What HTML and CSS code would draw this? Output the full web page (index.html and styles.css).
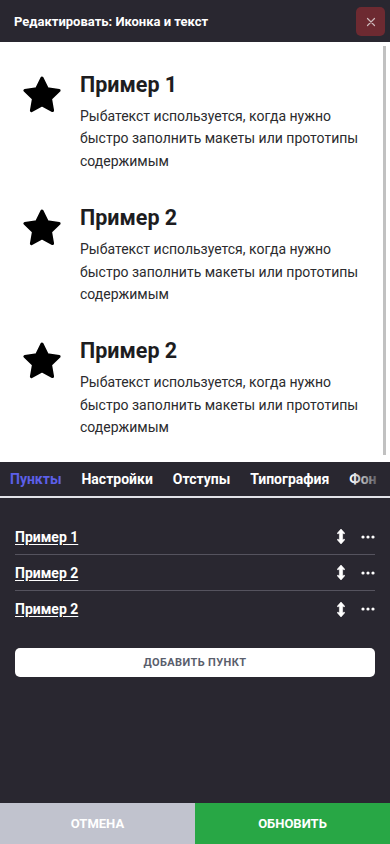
FILE: index.html
```html
<!DOCTYPE html>
<html lang="ru">
<head>
<meta charset="utf-8">
<title>Редактировать: Иконка и текст</title>
<link rel="stylesheet" href="styles.css">
</head>
<body>
<div class="app">
  <header class="header">
    <div class="header-title">Редактировать: Иконка и текст</div>
    <button class="close-btn" aria-label="Закрыть">
      <svg width="10" height="10" viewBox="0 0 10 10"><path d="M1.5 1.5 L8.5 8.5 M8.5 1.5 L1.5 8.5" stroke="#cdb9bb" stroke-width="1.2" stroke-linecap="round"/></svg>
    </button>
  </header>

  <section class="preview">
    <div class="item">
      <svg class="star" viewBox="0 0 40 40"><polygon points="20,3 25.29,13.72 37.12,15.44 28.56,23.78 30.58,35.56 20,30 9.42,35.56 11.44,23.78 2.88,15.44 14.71,13.72" fill="#000" stroke="#000" stroke-width="3" stroke-linejoin="round"/></svg>
      <div class="item-body">
        <h2 class="item-title">Пример 1</h2>
        <p class="item-text">Рыбатекст используется, когда нужно быстро заполнить макеты или прототипы содержимым</p>
      </div>
    </div>
    <div class="item">
      <svg class="star" viewBox="0 0 40 40"><polygon points="20,3 25.29,13.72 37.12,15.44 28.56,23.78 30.58,35.56 20,30 9.42,35.56 11.44,23.78 2.88,15.44 14.71,13.72" fill="#000" stroke="#000" stroke-width="3" stroke-linejoin="round"/></svg>
      <div class="item-body">
        <h2 class="item-title">Пример 2</h2>
        <p class="item-text">Рыбатекст используется, когда нужно быстро заполнить макеты или прототипы содержимым</p>
      </div>
    </div>
    <div class="item">
      <svg class="star" viewBox="0 0 40 40"><polygon points="20,3 25.29,13.72 37.12,15.44 28.56,23.78 30.58,35.56 20,30 9.42,35.56 11.44,23.78 2.88,15.44 14.71,13.72" fill="#000" stroke="#000" stroke-width="3" stroke-linejoin="round"/></svg>
      <div class="item-body">
        <h2 class="item-title">Пример 2</h2>
        <p class="item-text">Рыбатекст используется, когда нужно быстро заполнить макеты или прототипы содержимым</p>
      </div>
    </div>
    <div class="scrollbar"></div>
  </section>

  <nav class="tabs">
    <div class="tab active">Пункты</div>
    <div class="tab">Настройки</div>
    <div class="tab">Отступы</div>
    <div class="tab">Типография</div>
    <div class="tab">Фон</div>
    <div class="tabs-fade"></div>
  </nav>

  <main class="panel">
    <ul class="list">
      <li class="row">
        <a class="row-link">Пример 1</a>
        <span class="row-actions">
          <svg class="sort" width="8" height="15" viewBox="0 0 8 15"><path d="M4 0 L8 4.6 H5.6 V10.4 H8 L4 15 L0 10.4 H2.4 V4.6 H0 Z" fill="#fff" stroke="#fff" stroke-width="0.6" stroke-linejoin="round"/></svg>
          <svg class="dots" width="14" height="4" viewBox="0 0 14 4"><circle cx="2" cy="2" r="1.6" fill="#fff"/><circle cx="7" cy="2" r="1.6" fill="#fff"/><circle cx="12" cy="2" r="1.6" fill="#fff"/></svg>
        </span>
      </li>
      <li class="row">
        <a class="row-link">Пример 2</a>
        <span class="row-actions">
          <svg class="sort" width="8" height="15" viewBox="0 0 8 15"><path d="M4 0 L8 4.6 H5.6 V10.4 H8 L4 15 L0 10.4 H2.4 V4.6 H0 Z" fill="#fff" stroke="#fff" stroke-width="0.6" stroke-linejoin="round"/></svg>
          <svg class="dots" width="14" height="4" viewBox="0 0 14 4"><circle cx="2" cy="2" r="1.6" fill="#fff"/><circle cx="7" cy="2" r="1.6" fill="#fff"/><circle cx="12" cy="2" r="1.6" fill="#fff"/></svg>
        </span>
      </li>
      <li class="row">
        <a class="row-link">Пример 2</a>
        <span class="row-actions">
          <svg class="sort" width="8" height="15" viewBox="0 0 8 15"><path d="M4 0 L8 4.6 H5.6 V10.4 H8 L4 15 L0 10.4 H2.4 V4.6 H0 Z" fill="#fff" stroke="#fff" stroke-width="0.6" stroke-linejoin="round"/></svg>
          <svg class="dots" width="14" height="4" viewBox="0 0 14 4"><circle cx="2" cy="2" r="1.6" fill="#fff"/><circle cx="7" cy="2" r="1.6" fill="#fff"/><circle cx="12" cy="2" r="1.6" fill="#fff"/></svg>
        </span>
      </li>
    </ul>
    <button class="add-btn">Добавить пункт</button>
  </main>

  <footer class="footer">
    <button class="btn-cancel">Отмена</button>
    <button class="btn-update">Обновить</button>
  </footer>
</div>
</body>
</html>
```

FILE: styles.css
```css
* { box-sizing: border-box; }
html, body { margin: 0; padding: 0; }
body {
  background: #292730;
  font-family: Roboto, "Liberation Sans", Arial, sans-serif;
  color: #fff;
}
.app {
  width: 390px;
  height: 844px;
  display: flex;
  flex-direction: column;
  overflow: hidden;
}
.header {
  height: 42px;
  flex: none;
  display: flex;
  align-items: center;
  justify-content: space-between;
  padding: 0 5px 0 14px;
  background: #292730;
}
.header-title {
  font-size: 13px;
  font-weight: 700;
  color: #fff;
}
.close-btn {
  width: 29px;
  height: 29px;
  border: none;
  border-radius: 5px;
  background: #6d2a31;
  display: flex;
  align-items: center;
  justify-content: center;
  padding: 0;
  margin-top: 1px;
}
.preview {
  position: relative;
  height: 420px;
  flex: none;
  background: #fff;
  padding: 30px 20px 0 22px;
  display: flex;
  flex-direction: column;
  gap: 33px;
}
.item {
  display: flex;
  gap: 18px;
  align-items: flex-start;
}
.star {
  width: 40px;
  height: 40px;
  flex: none;
  margin-top: 3px;
}
.item-body { flex: 1; }
.item-title {
  margin: 0 0 8px;
  font-size: 21.5px;
  line-height: 25px;
  font-weight: 700;
  color: #1d1d1f;
}
.item-text {
  margin: 0;
  font-size: 14px;
  line-height: 22.4px;
  color: #2b2b2e;
}
.scrollbar {
  position: absolute;
  right: 4px;
  top: 4px;
  bottom: 7px;
  width: 3px;
  background: #c1c1c1;
}
.tabs {
  position: relative;
  height: 36px;
  flex: none;
  display: flex;
  border-bottom: 2px solid #e2e2e8;
  white-space: nowrap;
  overflow: hidden;
}
.tab {
  padding: 0 10px;
  font-size: 14px;
  font-weight: 700;
  color: #fff;
  display: flex;
  align-items: center;
  margin-bottom: -2px;
  border-bottom: 2px solid transparent;
  flex: none;
}
.tab.active {
  color: #5c5fe8;
  border-bottom-color: #5c5fe8;
}
.tabs-fade {
  position: absolute;
  right: 0;
  top: 0;
  bottom: -2px;
  width: 40px;
  background: linear-gradient(to right, rgba(41,39,48,0), #292730 90%);
}
.panel {
  flex: 1;
  padding: 21px 15px 0;
}
.list {
  list-style: none;
  margin: 0;
  padding: 0;
}
.row {
  height: 36px;
  display: flex;
  align-items: center;
  justify-content: space-between;
  border-bottom: 1px solid #55535e;
}
.row:last-child { border-bottom: none; }
.row-link {
  font-size: 14px;
  font-weight: 700;
  color: #fff;
  text-decoration: underline;
  text-underline-offset: 2px;
}
.row-actions {
  display: flex;
  align-items: center;
  gap: 16px;
}
.add-btn {
  display: block;
  width: 100%;
  height: 29px;
  margin-top: 21px;
  border: none;
  border-radius: 5px;
  background: #fff;
  font-family: Roboto, "Liberation Sans", Arial, sans-serif;
  font-size: 11px;
  font-weight: 700;
  letter-spacing: 0.4px;
  text-transform: uppercase;
  color: #5a5e6c;
}
.footer {
  height: 41px;
  flex: none;
  display: flex;
}
.footer button {
  flex: 1;
  border: none;
  font-family: Roboto, "Liberation Sans", Arial, sans-serif;
  font-size: 13px;
  font-weight: 700;
  text-transform: uppercase;
  color: #fff;
}
.btn-cancel { background: #c1c3ce; }
.btn-update { background: #28a745; }
```
